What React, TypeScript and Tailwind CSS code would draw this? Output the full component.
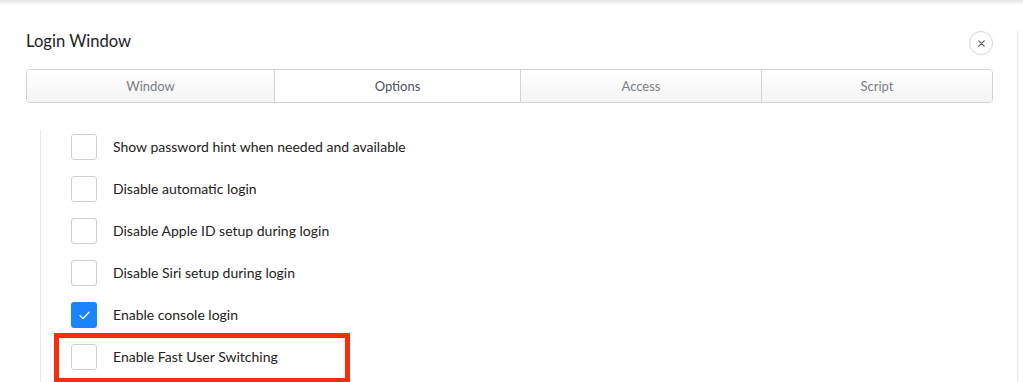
import React from 'react';

const tabs = [
  { label: 'Window', w: 'w-[247px]', active: false },
  { label: 'Options', w: 'w-[246px]', active: true },
  { label: 'Access', w: 'w-[241px]', active: false },
  { label: 'Script', w: 'flex-1', active: false },
];

const options = [
  { label: 'Show password hint when needed and available', checked: false },
  { label: 'Disable automatic login', checked: false },
  { label: 'Disable Apple ID setup during login', checked: false },
  { label: 'Disable Siri setup during login', checked: false },
  { label: 'Enable console login', checked: true },
  { label: 'Enable Fast User Switching', checked: false },
];

function Checkbox({ checked }: { checked: boolean }) {
  if (checked) {
    return (
      <div className="w-[26px] h-[26px] rounded-[3px] bg-[#1a84fc] flex items-center justify-center shrink-0">
        <svg width="11" height="9" viewBox="0 0 11 9" fill="none">
          <path d="M1 4.6 L4 7.6 L10 1.2" stroke="white" strokeWidth="1.3" strokeLinecap="round" strokeLinejoin="round" />
        </svg>
      </div>
    );
  }
  return <div className="w-[26px] h-[26px] rounded-[3px] border border-[#cfcfcf] bg-white shrink-0" />;
}

export default function App() {
  return (
    <div className="w-[1023px] h-[382px] overflow-hidden bg-white relative" style={{ fontFamily: 'Lato, "Open Sans", sans-serif' }}>
      {/* top shadow from header */}
      <div className="h-[5px] bg-gradient-to-b from-[#e4e4e4] to-white" />

      <div className="w-[1018px] h-[377px] border-r border-[#e6e6e6] pl-[26px] pr-[24px]">
        {/* Title row */}
        <div className="mt-[26px] h-[24px] flex items-center justify-between">
          <h2 className="text-[16.6px] text-[#222] leading-none pb-[3px]">Login Window</h2>
          <button className="w-[24px] h-[24px] rounded-full border border-[#d6d6d6] bg-white flex items-center justify-center">
            <svg width="7" height="7" viewBox="0 0 7 7">
              <path d="M0.8 0.8 L6.2 6.2 M6.2 0.8 L0.8 6.2" stroke="#555b66" strokeWidth="1.2" strokeLinecap="round" />
            </svg>
          </button>
        </div>

        {/* Tabs */}
        <div className="mt-[14px] h-[34px] flex border border-[#d3d3d3] rounded-[4px] overflow-hidden">
          {tabs.map((t, i) => (
            <div
              key={t.label}
              className={
                t.w +
                ' flex items-center justify-center text-[13px] pt-[2px] ' +
                (i > 0 ? 'border-l border-[#d3d3d3] ' : '') +
                (t.active ? 'bg-white text-[#4b5160]' : 'bg-gradient-to-b from-white to-[#f4f4f4] text-[#7a7e87]')
              }
            >
              {t.label}
            </div>
          ))}
        </div>

        {/* Options list */}
        <div className="mt-[27px] ml-[14px] border-l border-[#e8e8e8] pl-[30px] pt-[4px] h-[260px] flex flex-col gap-[16px]">
          {options.map((o) => (
            <div key={o.label} className="flex items-center gap-[16px] h-[26px]">
              <Checkbox checked={o.checked} />
              <span className="text-[14px] text-[#222] pb-[2px]">{o.label}</span>
            </div>
          ))}
        </div>
      </div>

      {/* highlight annotation */}
      <div className="absolute left-[54px] top-[333px] w-[296px] h-[50px] border-[5px] border-[#fb2c0c]" />
    </div>
  );
}
